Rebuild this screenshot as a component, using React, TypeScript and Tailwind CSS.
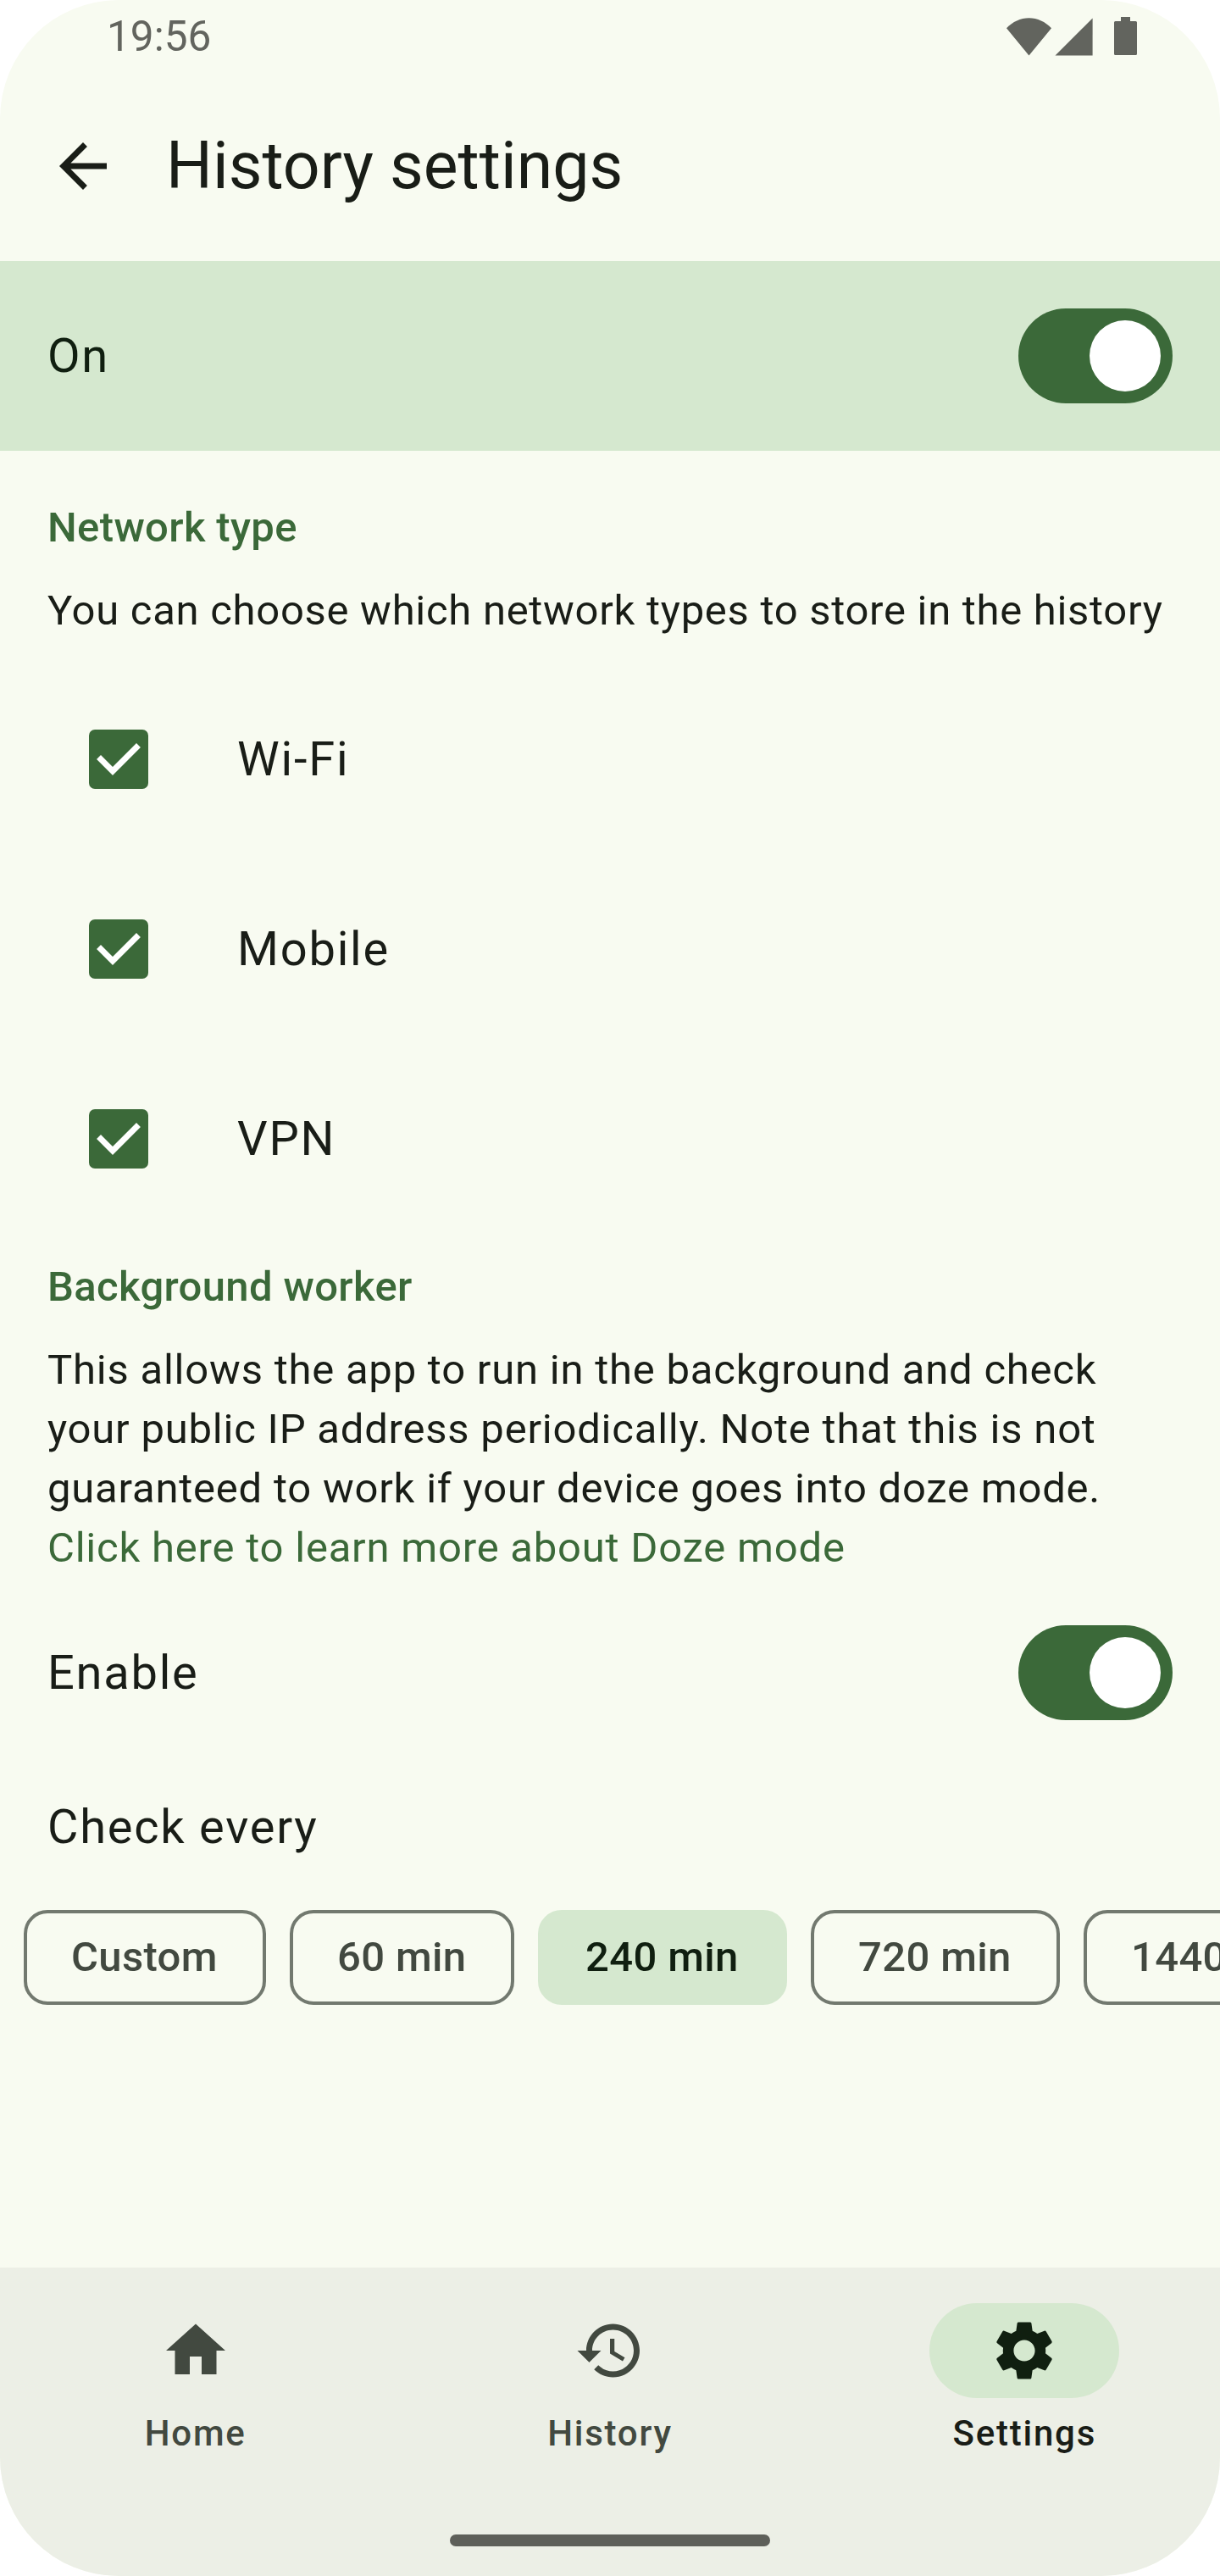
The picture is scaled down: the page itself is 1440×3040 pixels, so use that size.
import React from "react";

function Switch() {
  return (
    <div className="flex h-[112px] w-[182px] shrink-0 items-center justify-end rounded-full bg-[#3b6939] pr-[14px]">
      <div className="size-[84px] rounded-full bg-white" />
    </div>
  );
}

function CheckRow({ label }: { label: string }) {
  return (
    <div className="flex h-[224px] items-center pl-[105px]">
      <div className="size-[70px] shrink-0 rounded-[7px] bg-[#3b6939]">
        <svg className="size-[70px]" viewBox="0 0 20 20" fill="none">
          <path d="M4 10L8 14L16 6" stroke="#fff" strokeWidth="2" strokeLinecap="square" />
        </svg>
      </div>
      <span className="ml-[105px] text-[56px] leading-[84px] tracking-[1.8px]">{label}</span>
    </div>
  );
}

function SectionTitle({ children }: { children: React.ReactNode }) {
  return (
    <h2 className="text-[49px] font-medium leading-[70px] tracking-[0.35px] text-[#3b6939]">
      {children}
    </h2>
  );
}

const chips = [
  { label: "Custom", width: "w-[286px]" },
  { label: "60 min", width: "w-[265px]" },
  { label: "240 min", width: "w-[294px]", selected: true },
  { label: "720 min", width: "w-[294px]" },
  { label: "1440 min", width: "w-[322px]" },
];

const navItems = [
  { label: "Home", path: "M10 20v-6h4v6h5v-8h3L12 3 2 12h3v8z" },
  {
    label: "History",
    path: "M13 3c-4.97 0-9 4.03-9 9H1l3.89 3.89.07.14L9 12H6c0-3.87 3.13-7 7-7s7 3.13 7 7-3.13 7-7 7c-1.93 0-3.68-.79-4.94-2.06l-1.42 1.42C8.27 19.99 10.51 21 13 21c4.97 0 9-4.03 9-9s-4.03-9-9-9zm-1 5v5l4.28 2.54.72-1.21-3.5-2.08V8H12z",
  },
  {
    label: "Settings",
    active: true,
    path: "M19.14 12.94c.04-.3.06-.61.06-.94 0-.32-.02-.64-.07-.94l2.03-1.58c.18-.14.23-.41.12-.61l-1.92-3.32c-.12-.22-.37-.29-.59-.22l-2.39.96c-.5-.38-1.03-.7-1.62-.94l-.36-2.54c-.04-.24-.24-.41-.48-.41h-3.84c-.24 0-.43.17-.47.41l-.36 2.54c-.59.24-1.13.57-1.62.94l-2.39-.96c-.22-.08-.47 0-.59.22L2.74 8.87c-.12.21-.08.47.12.61l2.03 1.58c-.05.3-.09.63-.09.94s.02.64.07.94l-2.03 1.58c-.18.14-.23.41-.12.61l1.92 3.32c.12.22.37.29.59.22l2.39-.96c.5.38 1.03.7 1.62.94l.36 2.54c.05.24.24.41.48.41h3.84c.24 0 .44-.17.47-.41l.36-2.54c.59-.24 1.13-.56 1.62-.94l2.39.96c.22.08.47 0 .59-.22l1.92-3.32c.12-.22.07-.47-.12-.61l-2.01-1.58zM12 15.6c-1.98 0-3.6-1.62-3.6-3.6s1.62-3.6 3.6-3.6 3.6 1.62 3.6 3.6-1.62 3.6-3.6 3.6z",
  },
];

export default function App() {
  return (
    <div className="flex h-[3040px] w-[1440px] flex-col overflow-hidden rounded-[140px] bg-[#f8fbf1] font-['Roboto',sans-serif] text-[#191d17]">
      <div className="flex h-[84px] shrink-0 items-center justify-between pl-[126px] pr-[98px] text-[#62645e]">
        <span className="pt-[2px] text-[49.5px] leading-[82px]">19:56</span>
        <div className="flex h-full items-start pt-5">
          <svg className="h-[46px] w-[53px]" viewBox="0 0 53 46" fill="currentColor">
            <path d="M0 13.3C7.3 5.5 16.5 1.2 26.5 1.2S45.7 5.5 53 13.3L26.5 45.5z" />
          </svg>
          <svg className="ml-[4px] h-[46px] w-[45px]" viewBox="0 0 45 46" fill="currentColor">
            <path d="M0.5 45.6L44.6 1.5V45.6z" />
          </svg>
          <svg className="ml-[25px] h-[46px] w-[27px]" viewBox="0 0 27 46" fill="currentColor">
            <path d="M8 0h11v5h6.500q1.500 0 1.500 1.500v37q0 1.500-1.500 1.500h-24q-1.500 0-1.500-1.500v-37q0-1.500 1.500-1.500H8z" />
          </svg>
        </div>
      </div>

      <header className="flex h-[224px] shrink-0 items-center pl-[56px]">
        <svg className="size-[84px]" viewBox="0 0 24 24" fill="currentColor">
          <path d="M20 11H7.83l5.590-5.590L12 4l-8 8 8 8 1.410-1.410L7.830 13H20v-2z" />
        </svg>
        <h1 className="ml-[56px] text-[77px] leading-[98px]">History settings</h1>
      </header>

      <div className="flex h-[224px] shrink-0 items-center justify-between bg-[#d5e8cf] px-14">
        <span className="text-[56px] leading-[84px] tracking-[1.8px] text-[#101f10]">On</span>
        <Switch />
      </div>

      <main className="flex min-h-0 flex-1 flex-col">
        <section className="px-14 pt-14">
          <SectionTitle>Network type</SectionTitle>
          <p className="mt-7 whitespace-nowrap text-[49px] leading-[70px] tracking-[0.71px]">
            You can choose which network types to store in the history
          </p>
        </section>
        <div className="mt-7">
          <CheckRow label="Wi-Fi" />
          <CheckRow label="Mobile" />
          <CheckRow label="VPN" />
        </div>
        <section className="px-14 pt-7">
          <SectionTitle>Background worker</SectionTitle>
          <p className="mt-7 whitespace-nowrap text-[49px] leading-[70px] tracking-[0.78px]">
            This allows the app to run in the background and check
            <br />
            your public IP address periodically. Note that this is not
            <br />
            guaranteed to work if your device goes into doze mode.
            <br />
            <a className="text-[#3b6939]">Click here to learn more about Doze mode</a>
          </p>
        </section>
        <div className="mt-14 flex items-center justify-between px-14">
          <span className="text-[56px] leading-[84px] tracking-[1.75px]">Enable</span>
          <Switch />
        </div>
        <div className="mt-[84px] px-14 text-[56px] leading-[84px] tracking-[1.75px]">Check every</div>
        <div className="mt-14 flex gap-7 overflow-hidden pl-7">
          {chips.map((c) => (
            <div
              key={c.label}
              className={`flex h-[112px] shrink-0 items-center rounded-[28px] border-4 pl-[52px] whitespace-nowrap text-[49px] font-medium leading-[70px] tracking-[0.35px] ${c.width} ${
                c.selected
                  ? "border-[#d5e8cf] bg-[#d5e8cf] text-[#101f10]"
                  : "border-[#72796f] text-[#424940]"
              }`}
            >
              {c.label}
            </div>
          ))}
        </div>
      </main>

      <nav className="flex h-[364px] shrink-0 flex-col items-center bg-[#ecefe6]">
        <div className="grid w-full grid-cols-3 gap-7 pt-[42px]">
          {navItems.map((n) => (
            <div key={n.label} className="flex flex-col items-center">
              <div
                className={`flex h-[112px] w-[224px] items-center justify-center rounded-full ${
                  n.active ? "bg-[#d5e8cf] text-[#101f10]" : "text-[#424940]"
                }`}
              >
                <svg className="size-[84px]" viewBox="0 0 24 24" fill="currentColor">
                  <path d={n.path} />
                </svg>
              </div>
              <span
                className={`mt-[14px] text-[42px] font-medium leading-[56px] tracking-[1.75px] ${
                  n.active ? "text-[#191d17]" : "text-[#424940]"
                }`}
              >
                {n.label}
              </span>
            </div>
          ))}
        </div>
        <div className="mt-[91px] h-[14px] w-[378px] rounded-full bg-[#5e605a]" />
      </nav>
    </div>
  );
}
